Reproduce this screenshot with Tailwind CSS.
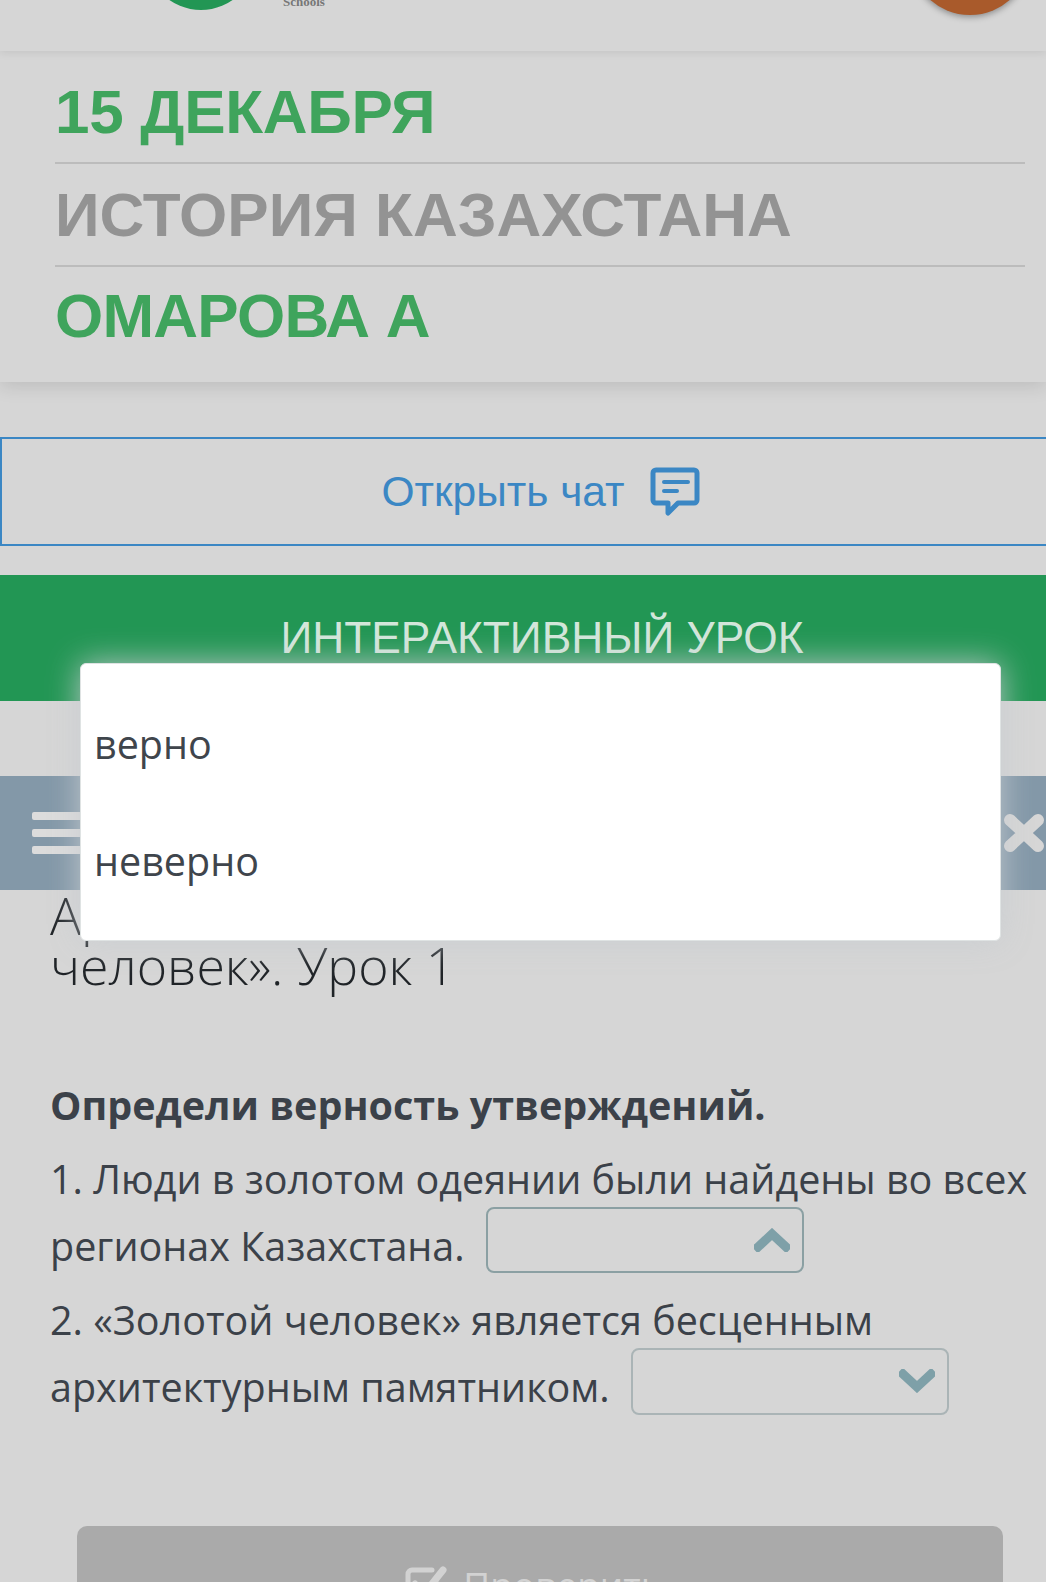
<!DOCTYPE html>
<html lang="ru">
  <head>
    <meta charset="UTF-8" />
    <meta name="viewport" content="width=device-width, initial-scale=1.0" />
    <title>Интерактивный урок</title>
    <script src="https://cdn.jsdelivr.net/npm/@tailwindcss/browser@4"></script>
  </head>
  <body class="bg-[#d6d6d6] overflow-hidden font-['Open_Sans',sans-serif]">
    <div class="relative w-[1046px] h-[1582px] overflow-hidden">
      <!-- Header, cut by the top of the screenshot -->
      <header class="relative z-10 flex items-start h-[51px] overflow-hidden bg-[#d6d6d6] shadow-[0_2px_8px_rgba(0,0,0,0.08)]">
        <div class="w-[110px] h-[110px] shrink-0 ml-[146px] mt-[-100px] rounded-full bg-[#229654]"></div>
        <div class="ml-[27px] mt-[-5px] text-[13px] leading-[13px] font-bold text-[#777] font-['Liberation_Serif',serif]">Schools</div>
        <div class="w-[120px] h-[120px] shrink-0 ml-auto mr-[16px] mt-[-105px] rounded-full bg-[#a95a2b] shadow-[0_2px_6px_rgba(0,0,0,0.35)]"></div>
      </header>

      <!-- Lesson info -->
      <section class="relative h-[331px] px-[55px] pr-[21px] bg-[#d6d6d6] shadow-[0_4px_18px_rgba(0,0,0,0.12)] font-['Liberation_Sans',sans-serif] font-bold text-[62px] leading-[62px]">
        <div class="flex items-center h-[113px] pt-[10px] border-b-2 border-[#bcbcbc] text-[#3fa45c] tracking-[-0.3px]">15 ДЕКАБРЯ</div>
        <div class="flex items-center h-[103px] border-b-2 border-[#bcbcbc] text-[#939393]">ИСТОРИЯ КАЗАХСТАНА</div>
        <div class="flex items-center h-[101px] pb-[3px] text-[#3fa45c] tracking-[-0.8px]">ОМАРОВА А</div>
      </section>

      <!-- Open chat -->
      <button class="flex items-center justify-center w-[1050px] h-[109px] mt-[55px] pl-[31px] border-2 border-[#3b87c4] text-[42.5px] text-[#3b87c4] font-['Liberation_Sans',sans-serif]">
        <span>Открыть чат</span>
        <svg class="ml-[25px] mt-[1px]" width="50" height="50" viewBox="0 0 50 50" fill="none" stroke="#3b87c4" stroke-width="5" stroke-linejoin="round" stroke-linecap="round">
          <path d="M6 3h38a3 3 0 0 1 3 3v27a3 3 0 0 1-3 3H28l-10 10v-10H6a3 3 0 0 1-3-3V6a3 3 0 0 1 3-3z" />
          <path d="M14 15h24M14 24h13" stroke-width="4" />
        </svg>
      </button>

      <!-- Title band -->
      <div class="flex justify-center h-[126px] mt-[29px] pt-[35px] pl-[38px] bg-[#229654] text-[44.3px] leading-[56px] text-[#d3e6da] font-['Liberation_Sans',sans-serif]">ИНТЕРАКТИВНЫЙ УРОК</div>

      <!-- Toolbar -->
      <div class="flex items-center justify-between h-[114px] mt-[75px] pl-[32px] bg-[#8398a8]">
        <div class="flex flex-col gap-[9px] w-[60px]">
          <div class="h-[8px] rounded-[2px] bg-[#dcdcdc]"></div>
          <div class="h-[8px] rounded-[2px] bg-[#dcdcdc]"></div>
          <div class="h-[8px] rounded-[2px] bg-[#dcdcdc]"></div>
        </div>
        <svg class="mr-[1px]" width="42" height="40" viewBox="0 0 42 40" fill="none" stroke="#d6d6d6" stroke-width="12" stroke-linecap="round">
          <path d="M7 7l28 26M35 7L7 33" />
        </svg>
      </div>

      <!-- Lesson content -->
      <main class="px-[50px]">
        <h1 class="text-[51.8px] font-light leading-[50px] text-[#1f2327] whitespace-nowrap">
          Археология Казахстана: «Золотой<br />человек». Урок 1
        </h1>
        <div class="mt-[82px] text-[39.5px] leading-[67px] text-[#3b4149] w-[990px]">
          <p class="font-bold mb-[7px]">Определи верность утверждений.</p>
          <p class="mb-[7px] whitespace-nowrap">
            1. Люди в золотом одеянии были найдены во всех<br />
            регионах Казахстана.
            <span class="inline-flex items-center justify-end align-[9px] w-[318px] h-[66px] -my-[20px] ml-[11px] pr-[12px] rounded-[8px] border-2 border-[#8ba0a3]">
              <svg width="36" height="24" viewBox="0 0 36 24" fill="none" stroke="#7ea0a8" stroke-width="9" stroke-linecap="square">
                <path d="M4 19L18 6l14 13" />
              </svg>
            </span>
          </p>
          <p class="whitespace-nowrap">
            2. «Золотой человек» является бесценным<br />
            архитектурным памятником.
            <span class="inline-flex items-center justify-end align-[9px] w-[318px] h-[67px] -my-[20px] ml-[11px] pr-[12px] rounded-[8px] border-2 border-[#aab4b6]">
              <svg width="36" height="24" viewBox="0 0 36 24" fill="none" stroke="#7ea0a8" stroke-width="9" stroke-linecap="square">
                <path d="M4 5l14 13L32 5" />
              </svg>
            </span>
          </p>
        </div>
        <button class="flex items-start justify-center gap-[16px] w-[926px] h-[80px] mt-[105px] ml-[27px] pt-[38px] pr-[12px] rounded-t-[10px] bg-[#aaaaaa] text-[37px] leading-[54px] text-[#d2d2d2]">
          <svg class="shrink-0" width="42" height="42" viewBox="0 0 42 42" fill="none" stroke="#d2d2d2" stroke-width="5" stroke-linecap="round" stroke-linejoin="round">
            <path d="M33 20v14a4 4 0 0 1-4 4H7a4 4 0 0 1-4-4V10a4 4 0 0 1 4-4h20" />
            <path d="M10 20l9 10L38 6" stroke-width="7" />
          </svg>
          <span class="-mt-[6px]">Проверить</span>
        </button>
      </main>

      <!-- Open dropdown menu -->
      <div class="absolute left-[80px] top-[663px] w-[921px] h-[278px] rounded-[6px] border border-[#dfe3e3] bg-white shadow-[0_0_32px_rgba(200,204,208,0.9)] text-[39.5px] leading-[54px] text-[#3f454c]">
        <div class="px-[13px] pt-[53px]">верно</div>
        <div class="px-[13px] pt-[63px]">неверно</div>
      </div>
    </div>
  </body>
</html>
